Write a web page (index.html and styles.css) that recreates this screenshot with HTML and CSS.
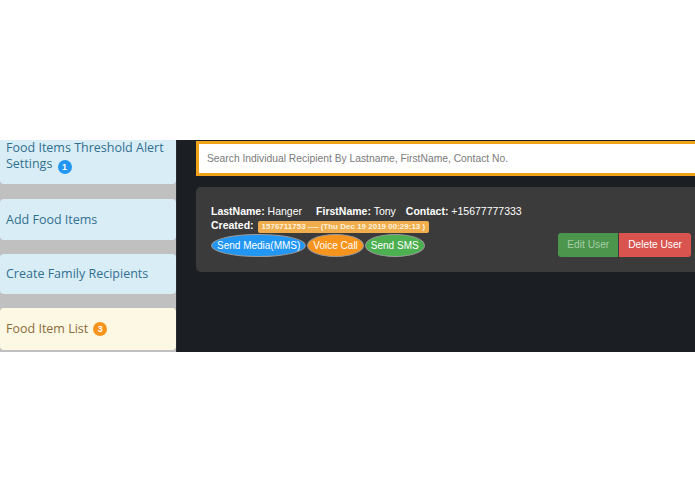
FILE: index.html
```html
<!DOCTYPE html>
<html>
<head>
<meta charset="utf-8">
<link rel="stylesheet" href="styles.css">
</head>
<body>
<div class="top-space"></div>
<div class="app">
  <aside class="sidebar">
    <div class="nav-card nav-info nav-first">Food Items Threshold Alert Settings <span class="count count-blue">1</span></div>
    <div class="nav-card nav-info nav-2">Add Food Items</div>
    <div class="nav-card nav-info nav-3">Create Family Recipients</div>
    <div class="nav-card nav-warn nav-4">Food Item List <span class="count count-orange">3</span></div>
  </aside>
  <main class="main">
    <div class="content">
      <div class="search"><input class="search-input" type="text" placeholder="Search Individual Recipient By Lastname, FirstName, Contact No."></div>
      <div class="recipient">
        <div class="line"><b>LastName:</b> Hanger<span class="sep"></span><b>FirstName:</b> Tony<span class="sep2"></span><b>Contact:</b> +15677777333</div>
        <div class="line"><b>Created:</b> <span class="label">1576711753 ---- (Thu Dec 19 2019 00:29:13 )</span></div>
        <div class="actions">
          <div class="pills">
            <span class="pill pill-blue">Send Media(MMS)</span>
            <span class="pill pill-orange">Voice Call</span>
            <span class="pill pill-green">Send SMS</span>
          </div>
          <div class="btns">
            <span class="btn btn-edit">Edit User</span>
            <span class="btn btn-delete">Delete User</span>
          </div>
        </div>
      </div>
    </div>
  </main>
</div>
</body>
</html>
```
FILE: styles.css
```css
html, body {
  margin: 0;
  padding: 0;
  background: #ffffff;
  overflow: hidden;
  width: 695px;
  height: 494px;
}
.top-space {
  height: 140px;
}
.app {
  display: flex;
  height: 212px;
  background: #1b1e23;
  overflow: hidden;
  width: 695px;
}
.sidebar {
  width: 176px;
  flex: none;
  background: #c0c0c0;
  display: flex;
  flex-direction: column;
  border-right: 1px solid #2a2c30;
}
.nav-card {
  font-family: "Comic Sans MS", "Open Sans", sans-serif;
  font-size: 12.5px;
  line-height: 16px;
  padding: 0 6px;
  border-radius: 4px;
  box-sizing: border-box;
  display: flex;
  align-items: center;
  flex-wrap: wrap;
}
.nav-info {
  background: #d9edf7;
  color: #31708f;
}
.nav-warn {
  background: #fcf8e3;
  color: #8a6d3b;
}
.nav-first {
  display: block;
  margin-top: 0;
  height: 44px;
  padding-top: 0;
  border-radius: 0 0 4px 4px;
}
.nav-2 {
  margin-top: 15px;
  height: 41px;
}
.nav-3 {
  margin-top: 14px;
  height: 40px;
}
.nav-4 {
  margin-top: 14px;
  height: 42px;
}
.count {
  display: inline-flex;
  align-items: center;
  justify-content: center;
  width: 14px;
  height: 14px;
  border-radius: 50%;
  color: #fff;
  font-family: "Liberation Sans", Arial, sans-serif;
  font-weight: bold;
  font-size: 9px;
  line-height: 14px;
  vertical-align: -2px;
  margin-left: 2px;
}
.count-blue {
  background: #2196f3;
}
.count-orange {
  background: #f7941d;
  margin-left: 5px;
}
.main {
  flex: none;
  padding: 1px 0 0 19px;
}
.content {
  width: 512px;
  font-family: "Liberation Sans", Arial, sans-serif;
}
.search-input {
  display: block;
  box-sizing: border-box;
  width: 512px;
  height: 35px;
  border: 3px solid #f0a31a;
  background: #fff;
  padding: 0 8px;
  font-family: "Liberation Sans", Arial, sans-serif;
  font-size: 10.3px;
  color: #555;
  outline: none;
  margin: 0;
}
.search-input::placeholder {
  color: #7b7b7b;
}
.recipient {
  margin-top: 11px;
  background: #3b3b3b;
  border-radius: 5px;
  padding: 17px 15px 15px 15px;
  color: #ffffff;
  font-size: 10.5px;
}
.line {
  line-height: 14px;
  white-space: nowrap;
}
.line b {
  font-weight: bold;
}
.sep {
  display: inline-block;
  width: 14px;
}
.sep2 {
  display: inline-block;
  width: 10px;
}
.label {
  display: inline-block;
  background: #f0ad4e;
  color: #fff3de;
  font-weight: bold;
  font-size: 8px;
  line-height: 12px;
  padding: 0 4px;
  border-radius: 2px;
  vertical-align: 0px;
  margin-left: 1px;
}
.actions {
  display: flex;
  justify-content: space-between;
  align-items: flex-start;
  height: 24px;
  margin-top: 0px;
}
.pills {
  display: flex;
  gap: 1px;
  padding-top: 1px;
}
.pill {
  display: inline-block;
  height: 23px;
  line-height: 21px;
  box-sizing: border-box;
  padding: 0 5px;
  border-radius: 50%;
  border: 1px solid #9a9a9a;
  font-size: 10px;
  color: #fff;
  white-space: nowrap;
}
.pill-blue {
  background: #2196f3;
}
.pill-orange {
  background: #f7941d;
}
.pill-green {
  background: #4caf50;
}
.btns {
  display: flex;
  margin-right: 2px;
}
.btn {
  display: inline-block;
  height: 24px;
  line-height: 24px;
  padding: 0 9px;
  font-size: 10.2px;
  white-space: nowrap;
}
.btn-edit {
  background: #4b954c;
  color: #a8cfa8;
  border-radius: 3px 0 0 3px;
}
.btn-delete {
  background: #d9534f;
  color: #ffffff;
  border-radius: 0 3px 3px 0;
  margin-left: 1px;
}
```
